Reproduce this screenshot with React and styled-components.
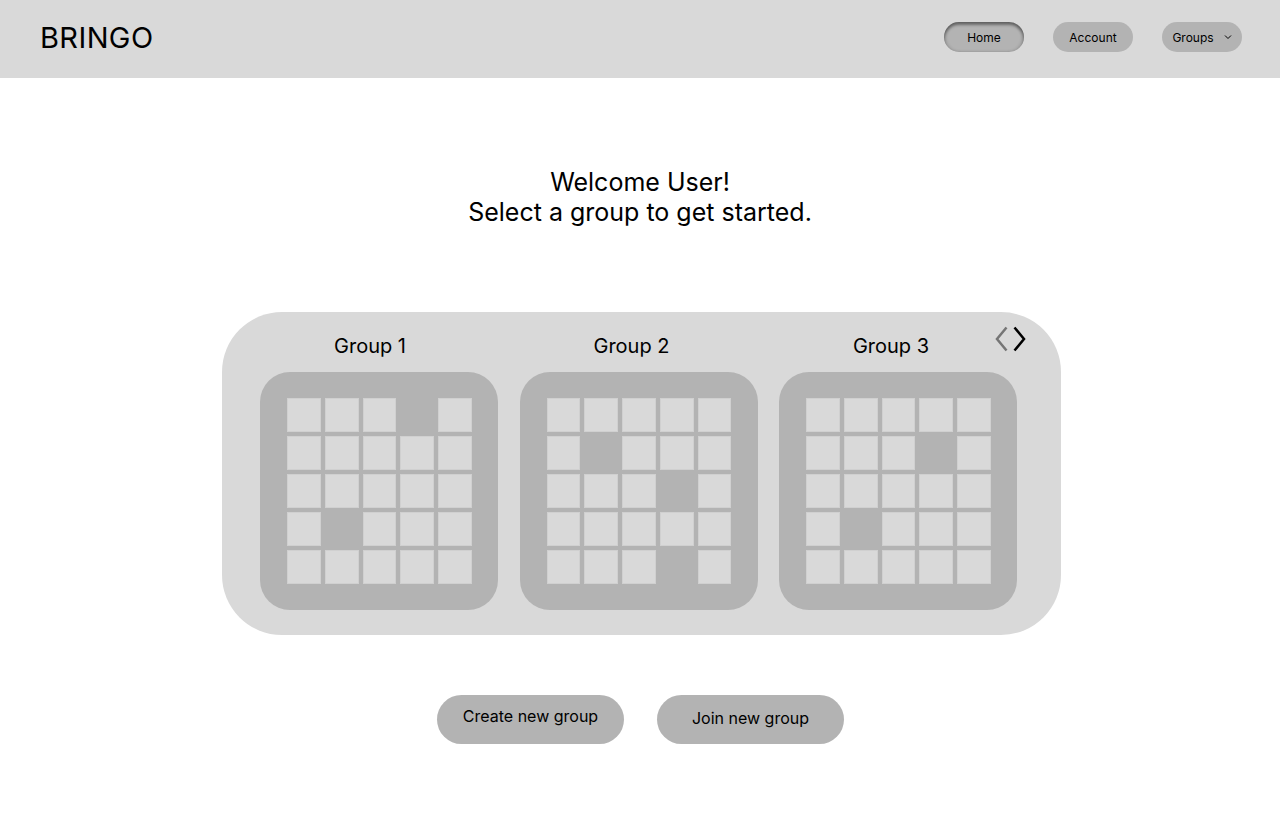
import React from 'react'
import styled, { createGlobalStyle } from 'styled-components'

const GlobalStyle = createGlobalStyle`
  body {
    margin: 0;
    background: #ffffff;
    font-family: Inter, "Noto Sans", sans-serif;
    color: #000;
  }
`

const groups = [
  { name: 'Group 1', marked: [3, 16] },
  { name: 'Group 2', marked: [6, 13, 23] },
  { name: 'Group 3', marked: [8, 16] },
]

const Page = styled.div`
  width: 1280px;
  height: 832px;
  display: flex;
  flex-direction: column;
`

const Header = styled.header`
  height: 78px;
  background: #d9d9d9;
  display: flex;
  align-items: center;
  justify-content: space-between;
  padding: 0 38px 0 40px;
  box-sizing: border-box;
`

const Logo = styled.div`
  font-size: 29px;
  font-weight: 400;
  letter-spacing: 0.4px;
  margin-top: -4px;
`

const Nav = styled.nav`
  display: flex;
  align-items: center;
  gap: 29px;
  margin-top: -4px;
`

const NavButton = styled.button`
  width: 80px;
  height: 30px;
  border: none;
  border-radius: 15px;
  background: #b3b3b3;
  font-family: Inter, sans-serif;
  font-size: 12px;
  color: #000;
  display: flex;
  align-items: center;
  justify-content: center;
  gap: 6px;
  padding: 0;
  box-shadow: ${p => p.active ? 'inset 0 3px 3px rgba(0,0,0,0.4), inset 2px 0 3px rgba(0,0,0,0.12), inset -2px 0 3px rgba(0,0,0,0.12)' : 'none'};
`

const Welcome = styled.h1`
  margin: 89px 0 0;
  font-size: 25px;
  font-weight: 400;
  line-height: 30px;
  text-align: center;
`

const Carousel = styled.section`
  position: relative;
  width: 839px;
  height: 323px;
  margin: 85px 0 0 222px;
  box-sizing: border-box;
  background: #d9d9d9;
  border-radius: 60px;
  display: flex;
  gap: 21.5px;
  padding: 22px 0 0 38px;
`

const Column = styled.div`
  display: flex;
  flex-direction: column;
  align-items: center;
  gap: 14px;
`

const GroupTitle = styled.div`
  font-size: 20px;
  line-height: 24px;
  margin-right: ${p => p.shift}px;
`

const Card = styled.div`
  width: 238px;
  height: 238px;
  box-sizing: border-box;
  background: #b3b3b3;
  border-radius: 30px;
  padding: 26px 26px 26px 27px;
  display: grid;
  grid-template-columns: repeat(5, 1fr);
  grid-template-rows: repeat(5, 1fr);
  gap: 4px;
`

const Cell = styled.div`
  background: ${p => p.marked ? '#b3b3b3' : '#d9d9d9'};
  box-shadow: ${p => p.marked ? 'none' : 'inset 0 0 0 1px #d0d0d0'};
`

const Arrows = styled.div`
  position: absolute;
  top: 14px;
  right: 34px;
  display: flex;
  gap: 3px;
`

const Actions = styled.div`
  display: flex;
  justify-content: center;
  gap: 33px;
  margin: 60px 0 0 1px;
`

const ActionButton = styled.button`
  width: 187px;
  height: 49px;
  border: none;
  border-radius: 25px;
  background: #b3b3b3;
  font-family: Inter, sans-serif;
  font-size: 16px;
  color: #000;
  padding: 0 0 ${p => p.lift}px;
`

const Chevron = ({ dir, color }) => (
  <svg width="15" height="26" viewBox="0 0 15 26">
    <path
      d={dir === 'left' ? 'M12.5 1.5 L3 13 L12.5 24.5' : 'M2.5 1.5 L12 13 L2.5 24.5'}
      fill="none"
      stroke={color}
      strokeWidth="2.5"
    />
  </svg>
)

const SmallChevron = () => (
  <svg width="8" height="6" viewBox="0 0 8 6" style={{ marginLeft: 4 }}>
    <path d="M1 1.5 L4 4.5 L7 1.5" fill="none" stroke="#000" strokeWidth="1" />
  </svg>
)

export default function App() {
  return (
    <>
      <GlobalStyle />
      <Page>
        <Header>
          <Logo>BRINGO</Logo>
          <Nav>
            <NavButton active>Home</NavButton>
            <NavButton>Account</NavButton>
            <NavButton>Groups<SmallChevron /></NavButton>
          </Nav>
        </Header>
        <Welcome>
          Welcome User!<br />Select a group to get started.
        </Welcome>
        <Carousel>
          <Arrows>
            <Chevron dir="left" color="#757575" />
            <Chevron dir="right" color="#000" />
          </Arrows>
          {groups.map((g, idx) => (
            <Column key={g.name}>
              <GroupTitle shift={idx === 0 ? 18 : 14}>{g.name}</GroupTitle>
              <Card>
                {Array.from({ length: 25 }).map((_, i) => (
                  <Cell key={i} marked={g.marked.includes(i)} />
                ))}
              </Card>
            </Column>
          ))}
        </Carousel>
        <Actions>
          <ActionButton lift={7}>Create new group</ActionButton>
          <ActionButton lift={4}>Join new group</ActionButton>
        </Actions>
      </Page>
    </>
  )
}
